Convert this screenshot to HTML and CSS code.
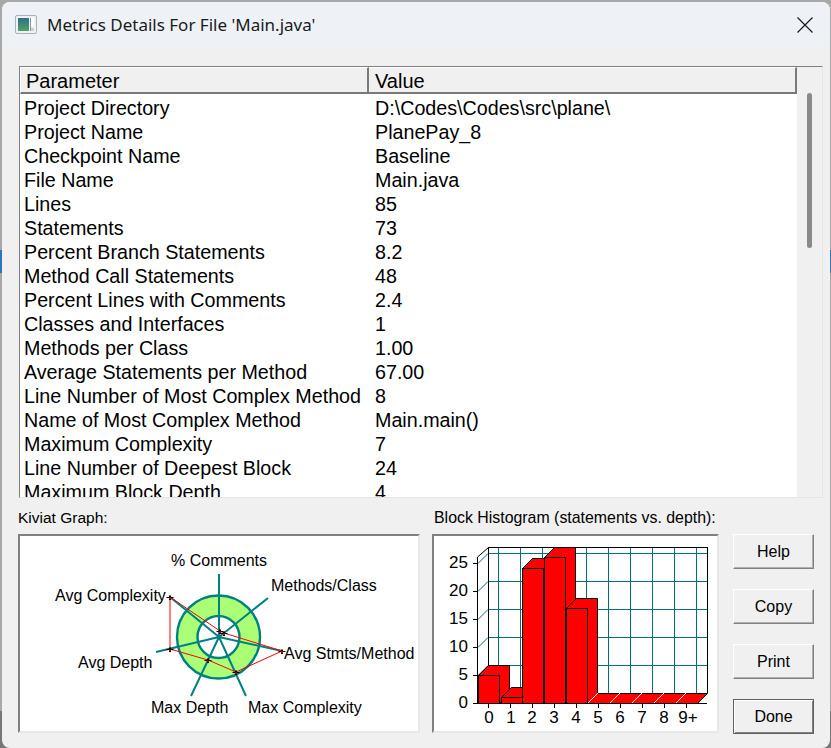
FILE: index.html
```html
<!DOCTYPE html>
<html lang="en">
<head>
<meta charset="utf-8">
<title>Metrics Details For File 'Main.java'</title>
<link rel="stylesheet" href="styles.css">
</head>
<body>
<div class="window">
  <header class="titlebar">
    <svg class="app-icon" width="23" height="20" viewBox="0 0 23 20">
      <rect x="0.5" y="0.5" width="21" height="18" rx="1.5" fill="#eef2f4" stroke="#a9b2b8"/>
      <defs><linearGradient id="ig" x1="0" y1="0" x2="0" y2="1"><stop offset="0" stop-color="#2f6f8f"/><stop offset="1" stop-color="#4ea35f"/></linearGradient></defs>
      <rect x="3" y="3" width="11" height="13" fill="url(#ig)"/>
      <rect x="16" y="3" width="3" height="8" fill="#ffffff"/>
      <rect x="15" y="3" width="1" height="13" fill="#7f97a3"/>
      <rect x="16" y="13" width="3" height="3" fill="#c8d6c8"/>
    </svg>
    <span class="title">Metrics Details For File 'Main.java'</span>
    <svg class="close" width="16" height="16" viewBox="0 0 16 16"><path d="M0.5 0.5L15.5 15.5M15.5 0.5L0.5 15.5" stroke="#1a1a1a" stroke-width="1.2" fill="none"/></svg>
  </header>
  <main class="body">
    <section class="list">
      <div class="list-main">
        <div class="list-head">
          <div class="head-cell head-param">Parameter</div>
          <div class="head-cell head-value">Value</div>
        </div>
        <div class="rows">
          <div class="row"><span class="k">Project Directory</span><span>D:\Codes\Codes\src\plane\</span></div>
          <div class="row"><span class="k">Project Name</span><span>PlanePay_8</span></div>
          <div class="row"><span class="k">Checkpoint Name</span><span>Baseline</span></div>
          <div class="row"><span class="k">File Name</span><span>Main.java</span></div>
          <div class="row"><span class="k">Lines</span><span>85</span></div>
          <div class="row"><span class="k">Statements</span><span>73</span></div>
          <div class="row"><span class="k">Percent Branch Statements</span><span>8.2</span></div>
          <div class="row"><span class="k">Method Call Statements</span><span>48</span></div>
          <div class="row"><span class="k">Percent Lines with Comments</span><span>2.4</span></div>
          <div class="row"><span class="k">Classes and Interfaces</span><span>1</span></div>
          <div class="row"><span class="k">Methods per Class</span><span>1.00</span></div>
          <div class="row"><span class="k">Average Statements per Method</span><span>67.00</span></div>
          <div class="row"><span class="k">Line Number of Most Complex Method</span><span>8</span></div>
          <div class="row"><span class="k">Name of Most Complex Method</span><span>Main.main()</span></div>
          <div class="row"><span class="k">Maximum Complexity</span><span>7</span></div>
          <div class="row"><span class="k">Line Number of Deepest Block</span><span>24</span></div>
          <div class="row"><span class="k">Maximum Block Depth</span><span>4</span></div>
        </div>
      </div>
      <div class="scroll"><div class="thumb"></div></div>
    </section>
    <section class="lower">
      <div class="panel panel-kiviat">
        <div class="caption caption-kiviat">Kiviat Graph:</div>
        <div class="frame">
          <svg width="398" height="195" viewBox="20 536 398 195">
            <defs>
              <g id="mark">
                <path d="M-1 -1.5h2v1.5h2.5v1h-2.5v2h-2v-2h-2.5v-1h2.5z" fill="#000"/>
                <path d="M-1.5 0.5h3l-1.5 2z" fill="#ff0000"/>
              </g>
            </defs>
            <circle cx="218.5" cy="637" r="41.5" fill="#aaff77" stroke="#008080" stroke-width="2.4"/>
            <circle cx="218.5" cy="637" r="21" fill="#ffffff" stroke="#008080" stroke-width="2.4"/>
            <g stroke="#008080" stroke-width="2" fill="none">
              <path d="M219 637L219 574M219 637L268 598M219 637L282 651M219 637L246 696M219 637L191 696M219 637L156 652M219 637L170 597"/>
            </g>
            <polygon points="220,631 224,633 282,651 236,672 208,660 170,649 170,597" fill="none" stroke="#ff0000" stroke-width="1"/>
            <use href="#mark" x="220" y="631"/>
            <use href="#mark" x="224" y="633"/>
            <use href="#mark" x="282" y="651"/>
            <use href="#mark" x="236" y="672"/>
            <use href="#mark" x="208" y="660"/>
            <use href="#mark" x="170" y="649"/>
            <use href="#mark" x="170" y="597"/>
            <g class="chart-text">
              <text x="171" y="566">% Comments</text>
              <text x="271" y="591">Methods/Class</text>
              <text x="284" y="659">Avg Stmts/Method</text>
              <text x="248" y="713">Max Complexity</text>
              <text x="151" y="713">Max Depth</text>
              <text x="78" y="668">Avg Depth</text>
              <text x="55" y="601">Avg Complexity</text>
            </g>
          </svg>
        </div>
      </div>
      <div class="panel panel-hist">
        <div class="caption caption-hist">Block Histogram (statements vs. depth):</div>
        <div class="frame">
          <svg width="285" height="195" viewBox="434 536 285 195" shape-rendering="crispEdges">
            <g stroke="#007070" stroke-width="1" fill="none">
              <path d="M488 553.5h220M488 581.5h220M488 609.5h220M488 637.5h220M488 665.5h220"/>
              <path d="M498.5 548v145M520.5 548v145M542.5 548v145M564.5 548v145M586.5 548v145M608.5 548v145M630.5 548v145M652.5 548v145M674.5 548v145M696.5 548v145"/>
            </g>
            <g stroke="#007070" stroke-width="1" fill="none" shape-rendering="auto">
              <path d="M478 563.5L488 553.5M478 591.5L488 581.5M478 619.5L488 609.5M478 647.5L488 637.5M478 675.5L488 665.5"/>
            </g>
            <g stroke="#000000" stroke-width="1" fill="none">
              <path d="M488.5 548v145M488 547.5h220M707.5 547v146M477.5 557v146"/>
              <path d="M473 703.5h5M473 675.5h5M473 647.5h5M473 619.5h5M473 591.5h5M473 563.5h5"/>
              <path d="M477 703.5h230"/>
              <path d="M488.5 704v4M510.5 704v4M532.5 704v4M554.5 704v4M576.5 704v4M598.5 704v4M620.5 704v4M642.5 704v4M664.5 704v4M686.5 704v4"/>
            </g>
            <path d="M477.5 557L488.5 547.5" stroke="#000" fill="none" shape-rendering="auto"/>
            <g stroke="#000000" stroke-width="1" fill="#ff0000" shape-rendering="auto">
              <path d="M587.5 703.5L597.5 693.5H707.5L697.5 703.5Z"/>
              <path d="M478.5 675.5L488.5 665.5H509.5V693.5L499.5 703.5V675.5Z"/>
              <rect x="478.5" y="675.5" width="21" height="28"/>
              <path d="M501.5 697.5L511.5 687.5H532.5V693.5L522.5 703.5V697.5Z"/>
              <rect x="501.5" y="697.5" width="21" height="6"/>
              <path d="M522.5 568.5L532.5 558.5H553.5V693.5L543.5 703.5V568.5Z"/>
              <rect x="522.5" y="568.5" width="21" height="135"/>
              <path d="M544.5 557.5L554.5 547.5H575.5V693.5L565.5 703.5V557.5Z"/>
              <rect x="544.5" y="557.5" width="21" height="146"/>
              <path d="M566.5 608.5L576.5 598.5H597.5V693.5L587.5 703.5V608.5Z"/>
              <rect x="566.5" y="608.5" width="21" height="95"/>
            </g>
            <g stroke="#ffffff" stroke-width="1" fill="none" shape-rendering="auto">
              <path d="M588 703L598 693M610 703L620 693M632 703L642 693M654 703L664 693M676 703L686 693"/>
            </g>
            <g class="chart-text tick-y" text-anchor="end">
              <text x="468" y="568">25</text>
              <text x="468" y="596">20</text>
              <text x="468" y="624">15</text>
              <text x="468" y="652">10</text>
              <text x="468" y="680">5</text>
              <text x="468" y="708">0</text>
            </g>
            <g class="chart-text tick-x" text-anchor="middle">
              <text x="489" y="723">0</text>
              <text x="511" y="723">1</text>
              <text x="532" y="723">2</text>
              <text x="554" y="723">3</text>
              <text x="576" y="723">4</text>
              <text x="598" y="723">5</text>
              <text x="620" y="723">6</text>
              <text x="642" y="723">7</text>
              <text x="664" y="723">8</text>
              <text x="688" y="723">9+</text>
            </g>
          </svg>
        </div>
      </div>
      <div class="buttons">
        <button class="btn" type="button">Help</button>
        <button class="btn" type="button">Copy</button>
        <button class="btn" type="button">Print</button>
        <button class="btn btn-default" type="button">Done</button>
      </div>
    </section>
  </main>
</div>
</body>
</html>
```
FILE: styles.css
```css
html, body { margin: 0; height: 100%; }
body {
  background: linear-gradient(to bottom, #a8a8a8 0 250px, #2e75b6 250px 273px, #a8a8a8 273px 711px, #777777 711px);
  overflow: hidden;
  font-family: "Liberation Sans", Arial, sans-serif;
  color: #000;
}
.window {
  width: 828px;
  height: 746px;
  margin: 2px 0 0 2px;
  border-radius: 8px;
  overflow: hidden;
  background: #f0f0f0;
  display: flex;
  flex-direction: column;
}
.titlebar {
  height: 45px;
  flex: none;
  background: #eef2f7;
  display: flex;
  align-items: center;
  padding: 0 17px 0 13px;
  box-sizing: border-box;
}
.app-icon { flex: none; margin-right: 9px; }
.title {
  font-family: "Noto Sans", sans-serif;
  font-size: 17px;
  color: #1a1a1a;
  flex: 1;
}
.close { flex: none; }
.body {
  flex: 1;
  display: flex;
  flex-direction: column;
  padding: 19px 7px 0 16px;
  min-height: 0;
}
.list {
  height: 432px;
  flex: none;
  margin-left: 1px;
  display: flex;
  border: 1px solid #e4e4e4;
  border-top-color: #808080;
  border-left-color: #808080;
  box-sizing: border-box;
  background: #f0f0f0;
}
.list-main { width: 777px; flex: none; background: #fff; overflow: hidden; display: flex; flex-direction: column; }
.list-head { display: flex; height: 27px; flex: none; background: #f0f0f0; font-size: 20px; line-height: 26px; }
.head-cell { box-sizing: border-box; border-bottom: 2px solid #7a7a7a; border-top: 1px solid #fff; }
.head-param { width: 349px; border-right: 2px solid #7a7a7a; padding-left: 5px; border-left: 1px solid #fff; }
.head-value { flex: 1; border-right: 2px solid #7a7a7a; padding-left: 6px; }
.rows { padding: 2px 0 0 4px; font-size: 19.7px; }
.row { display: flex; height: 24px; line-height: 24px; white-space: nowrap; }
.k { width: 351px; flex: none; }
.scroll { flex: 1; padding: 26px 0 0 10px; }
.thumb { width: 5px; height: 155px; background: #8a8a8a; border-radius: 3px; }
.lower { flex: 1; display: flex; min-height: 0; }
.caption { height: 36px; line-height: 39px; white-space: nowrap; }
.caption-kiviat { font-size: 15.5px; }
.caption-hist { font-size: 15.9px; padding-left: 2px; }
.frame {
  box-sizing: border-box;
  border: 2px solid #e8e8e8;
  border-top-color: #808080;
  border-left-color: #808080;
  background: #fff;
  height: 199px;
  overflow: hidden;
}
.frame svg { display: block; }
.panel-kiviat { width: 402px; flex: none; }
.panel-hist { width: 287px; flex: none; margin-left: 12px; }
.buttons { flex: none; width: 81px; margin-left: 14px; padding-top: 36px; display: flex; flex-direction: column; gap: 20px; }
.btn {
  display: block;
  width: 81px;
  height: 35px;
  box-sizing: border-box;
  padding: 0;
  font: 16px "Liberation Sans", Arial, sans-serif;
  color: #000;
  background: #f0f0f0;
  border: 1px solid;
  border-color: #fff #808080 #808080 #fff;
  box-shadow: inset -1px -1px 0 #b0b0b0;
}
.btn-default { border: 1px solid #606060; box-shadow: inset 1px 1px 0 #fff, inset -1px -1px 0 #808080; }
.chart-text { font-family: "Liberation Sans", Arial, sans-serif; font-size: 16px; fill: #000; }
.tick-y, .tick-x { font-size: 17px; }
```
